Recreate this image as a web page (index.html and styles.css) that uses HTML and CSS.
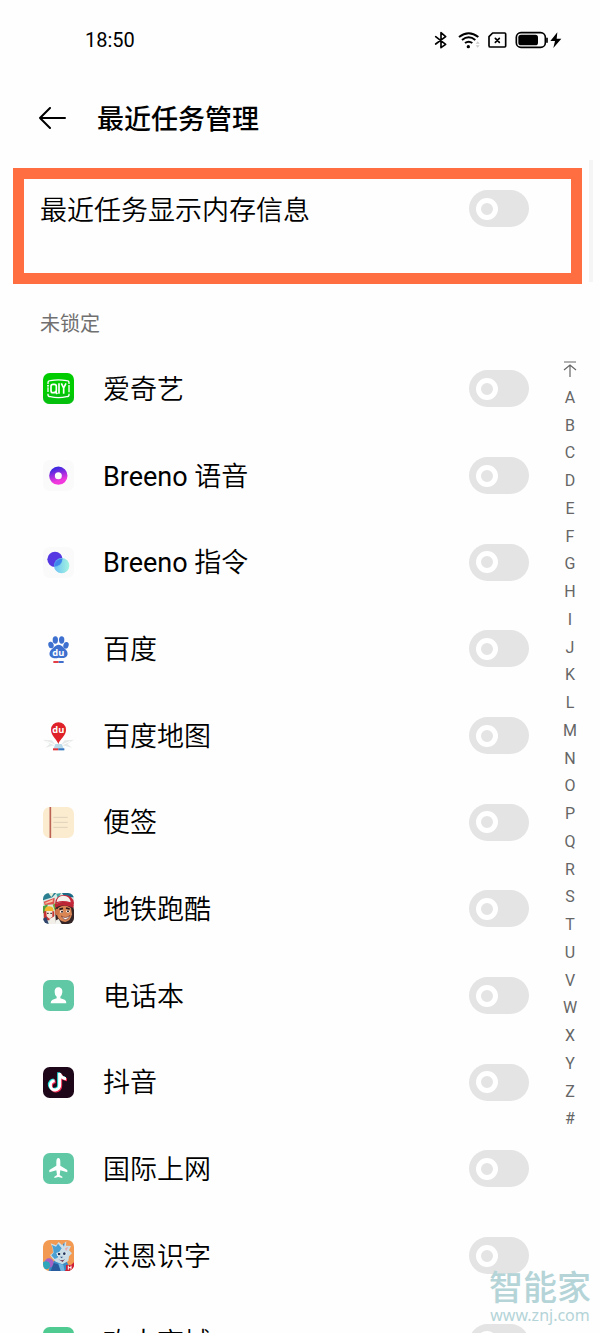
FILE: index.html
```html
<!DOCTYPE html>
<html lang="zh-CN">
<head>
<meta charset="utf-8">
<meta name="viewport" content="width=device-width, initial-scale=1">
<title>最近任务管理</title>
<link rel="stylesheet" href="styles.css">
</head>
<body>
<div class="screen">
  <div class="status">
    <time class="clock">18:50</time>
    <svg class="status-icons" width="130" height="20" viewBox="0 0 390 60" fill="none" stroke="#000" stroke-width="5" stroke-linecap="round" stroke-linejoin="round" aria-hidden="true">
      <path d="M8 20L38 43L24 53V8L38 20L8 42"/>
      <path d="M78 21Q107-2 136 21M87 30Q107 14 127 30M96 39Q107 31 118 39" stroke-width="6" stroke-linecap="butt"/>
      <circle cx="106" cy="50" r="5" fill="#000" stroke="none"/>
      <path d="M128 41L134 34L140 41ZM128 46L134 53L140 46Z" fill="#ccc" stroke="none"/>
      <path d="M179 9H215Q218 9 218 12V48Q218 51 215 51H172Q168 51 168 47V20Z" stroke-width="5"/>
      <path d="M187 25L199 37M199 25L187 37" stroke-width="5"/>
      <rect x="250" y="8" width="87" height="44" rx="14" stroke-width="5"/>
      <rect x="256" y="14" width="59" height="32" rx="8" fill="#000" stroke="none"/>
      <path d="M342 23V38" stroke-width="5" stroke-linecap="butt"/>
      <path d="M373 7L352 33H366L361 54L385 26H371Z" fill="#000" stroke="none"/>
    </svg>
  </div>

  <header class="header">
    <button class="back" aria-label="返回">
      <svg width="28" height="22" viewBox="0 0 28 22" fill="none" stroke="#000" stroke-width="2" stroke-linejoin="round" stroke-linecap="round" aria-hidden="true"><path d="M27 11H2M12 1L2 11L12 21"/></svg>
    </button>
    <h1 class="title">最近任务管理</h1>
  </header>

  <main>
    <section class="highlight">
      <label class="name" for="memory">最近任务显示内存信息</label>
      <input class="switch" id="memory" type="checkbox">
    </section>
    <h2 class="section-title">未锁定</h2>

    <div class="columns">
      <ul class="apps">
        <li class="app">
          <svg class="icon" viewBox="0 0 93 93" aria-hidden="true">
            <rect width="93" height="93" rx="20" fill="#0c0"/><rect y="62" width="93" height="31" rx="20" fill="#09b51a" opacity=".5"/>
            <path d="M15 33V29Q15 23 22 23Q46 18 71 23Q78 23 78 29V33M15 62V66Q15 71 22 71Q46 77 71 71Q78 71 78 66V62M15 43V57M78 36V58" fill="none" stroke="#fff" stroke-width="4"/>
            <circle cx="15" cy="38" r="3" fill="#fff"/>
            <rect x="24" y="34" width="16" height="25" rx="6" fill="none" stroke="#fff" stroke-width="5"/>
            <path d="M36 54L43 63M48 31V62M55 31L62 45L69 31M62 44V62" fill="none" stroke="#fff" stroke-width="5"/>
          </svg>
          <label class="name" for="a1">爱奇艺</label><input class="switch" id="a1" type="checkbox">
        </li>
        <li class="app">
          <svg class="icon" viewBox="0 0 93 93" aria-hidden="true">
            <defs><linearGradient id="ring" x2="0.3" y2="1"><stop stop-color="#3c28e0"/><stop offset=".5" stop-color="#9a2be0"/><stop offset="1" stop-color="#f038dc"/></linearGradient></defs>
            <rect width="93" height="93" rx="20" fill="#fbfafb"/><circle cx="46" cy="47" r="19" fill="none" stroke="url(#ring)" stroke-width="17"/>
          </svg>
          <label class="name" for="a2"><span class="latin">Breeno</span> 语音</label><input class="switch" id="a2" type="checkbox">
        </li>
        <li class="app">
          <svg class="icon" viewBox="0 0 93 93" aria-hidden="true">
            <defs><linearGradient id="mint" x2="1"><stop stop-color="#58b9f5"/><stop offset="1" stop-color="#98f3dc"/></linearGradient></defs>
            <rect width="93" height="93" rx="20" fill="#fbfafb"/><circle cx="36" cy="37" r="23" fill="#5638e2"/><circle cx="56" cy="56" r="23" fill="url(#mint)" opacity=".88"/>
            <path d="M58 35A23 23 0 0 0 34 58A23 23 0 0 0 58 35" fill="#3e86ec"/>
          </svg>
          <label class="name" for="a3"><span class="latin">Breeno</span> 指令</label><input class="switch" id="a3" type="checkbox">
        </li>
        <li class="app">
          <svg class="icon" viewBox="0 0 93 93" aria-hidden="true">
            <g fill="#3d70cf"><ellipse cx="24" cy="36" rx="8" ry="10" transform="rotate(-15 24 36)"/><ellipse cx="37" cy="21" rx="8" ry="11"/><ellipse cx="56" cy="21" rx="8" ry="11"/><ellipse cx="69" cy="37" rx="8" ry="10" transform="rotate(15 69 37)"/>
            <path d="M47 35C56 35 60 42 67 49C78 58 75 74 62 75Q53 76 47 74Q38 77 30 75C15 71 18 55 27 48C34 42 38 35 47 35Z"/></g>
            <text x="46" y="69" class="du">du</text>
            <path d="M31 87H47" stroke="#e43d43" stroke-width="6"/><path d="M47 87H62" stroke="#426fcb" stroke-width="6"/>
          </svg>
          <label class="name" for="a4">百度</label><input class="switch" id="a4" type="checkbox">
        </li>
        <li class="app">
          <svg class="icon" viewBox="0 0 93 93" aria-hidden="true">
            <path d="M0 59L27 61L38 75L7 83L20 72ZM93 59L65 61L54 75L87 83L73 72Z" fill="#e8eaea"/><path d="M10 64L38 76M82 64L54 76" stroke="#fff" stroke-width="3"/>
            <path d="M30 90L37 72H56L64 90Z" fill="#b9d9e9"/>
            <path d="M46 72C42 57 24 48 24 29A22 22 0 0 1 69 29C69 48 50 57 46 72Z" fill="#df2229"/>
            <text x="46" y="39" class="du">du</text>
            <path d="M30 88H46" stroke="#e2353b" stroke-width="6"/><path d="M46 88H64" stroke="#3476bd" stroke-width="6"/>
          </svg>
          <label class="name" for="a5">百度地图</label><input class="switch" id="a5" type="checkbox">
        </li>
        <li class="app">
          <svg class="icon" viewBox="0 0 93 93" aria-hidden="true">
            <rect width="93" height="93" rx="20" fill="#fbecd0"/><path d="M22 0V93" stroke="#bd6354" stroke-width="5"/><path d="M31 31H74M31 46H74M31 61H74" stroke="#dfd2b8" stroke-width="3"/>
          </svg>
          <label class="name" for="a6">便签</label><input class="switch" id="a6" type="checkbox">
        </li>
        <li class="app">
          <svg class="icon" viewBox="0 0 93 93" aria-hidden="true">
            <defs><clipPath id="tile"><rect width="93" height="93" rx="18"/></clipPath></defs>
            <g clip-path="url(#tile)">
              <rect width="93" height="93" fill="#d9ebe4"/>
              <path d="M0 0H40L28 13L0 22Z" fill="#2b7f91"/><path d="M16 0H33L25 12Z" fill="#e7efda"/><path d="M40 3L54 0L45 17Z" fill="#43a6a3"/><path d="M57 0H93V13H65Z" fill="#1a6986"/>
              <path d="M2 26L35 14L34 34L5 36Z" fill="#e0544e"/><path d="M5 30L30 19L29 26L8 32Z" fill="#f8c5a8"/>
              <path d="M0 40L14 34L12 57L0 61Z" fill="#4d9f42"/><path d="M29 35L42 28L38 60Z" fill="#71a941"/>
              <path d="M5 54Q5 39 20 40Q34 41 31 56Z" fill="#f2b72d"/><path d="M2 55H34V82H3Z" fill="#c73332"/><path d="M10 54H28V71L19 77L11 70Z" fill="#f7e8dc"/>
              <path d="M12 61H17M22 61H27" stroke="#222" stroke-width="3"/><path d="M0 77L10 72L17 93H0Z" fill="#30436b"/><path d="M20 77L36 69L43 93H18Z" fill="#f1efe8"/>
              <path d="M36 50Q39 28 64 27Q91 27 93 50V93H39Z" fill="#342426"/>
              <path d="M45 45Q65 30 84 45L87 64Q83 84 67 87Q46 84 42 65Z" fill="#d98554"/><ellipse cx="42" cy="57" rx="6" ry="10" fill="#cf744a"/>
              <path d="M36 32Q38 6 63 6Q90 7 93 30L91 38Q64 22 36 32Z" fill="#c4283a"/>
              <path d="M41 27Q42 9 61 8Q81 9 83 28Q60 20 41 27Z" fill="#f4f1ed"/>
              <path d="M35 34Q60 20 92 36L91 45Q61 31 37 44Z" fill="#bd2635"/>
              <path d="M49 49L60 46M69 45L80 48" stroke="#301d1c" stroke-width="5"/><ellipse cx="56" cy="56" rx="5" ry="4" fill="#fff"/><ellipse cx="75" cy="55" rx="5" ry="4" fill="#fff"/><circle cx="57" cy="56" r="3" fill="#291f21"/><circle cx="75" cy="55" r="3" fill="#291f21"/>
              <path d="M55 69Q68 79 81 67Q77 80 67 80Q59 79 55 69Z" fill="#fff" stroke="#6c2f25" stroke-width="2"/><path d="M39 82L47 78L56 93H37Z" fill="#f4f4f0"/>
            </g>
          </svg>
          <label class="name" for="a7">地铁跑酷</label><input class="switch" id="a7" type="checkbox">
        </li>
        <li class="app">
          <svg class="icon" viewBox="0 0 93 93" aria-hidden="true">
            <rect width="93" height="93" rx="20" fill="#60c8a4"/><path d="M46 22C55 22 59 29 58 37Q57 47 52 50V55L65 59Q70 61 70 70H23Q23 61 29 59L41 55V50Q35 46 35 37C34 28 38 22 46 22Z" fill="#fff"/>
          </svg>
          <label class="name" for="a8">电话本</label><input class="switch" id="a8" type="checkbox">
        </li>
        <li class="app">
          <svg class="icon" viewBox="0 0 93 93" aria-hidden="true">
            <rect width="93" height="93" rx="20" fill="#1d0718"/>
            <g fill="none" stroke-width="9"><path d="M50 18V54A14 14 0 1 1 35 41M50 20Q54 34 69 35" stroke="#25e5e0" transform="translate(-3 -2)"/><path d="M50 18V54A14 14 0 1 1 35 41M50 20Q54 34 69 35" stroke="#f52b55" transform="translate(3 3)"/><path d="M50 18V54A14 14 0 1 1 35 41M50 20Q54 34 69 35" stroke="#fff"/></g>
          </svg>
          <label class="name" for="a9">抖音</label><input class="switch" id="a9" type="checkbox">
        </li>
        <li class="app">
          <svg class="icon" viewBox="0 0 93 93" aria-hidden="true">
            <rect width="93" height="93" rx="20" fill="#60c8a4"/><path d="M46 15Q52 15 52 27V38L73 51V58L52 52L50 66L58 71V75L46 72L34 75V71L42 66L40 52L19 58V51L40 38V27Q40 15 46 15Z" fill="#fff"/>
          </svg>
          <label class="name" for="a10">国际上网</label><input class="switch" id="a10" type="checkbox">
        </li>
        <li class="app">
          <svg class="icon" viewBox="0 0 93 93" aria-hidden="true">
            <defs><clipPath id="tile2"><rect width="93" height="93" rx="20"/></clipPath></defs>
            <g clip-path="url(#tile2)">
              <rect width="93" height="93" fill="#f29a52"/>
              <path d="M17 93Q20 69 35 62L68 61Q80 76 82 93Z" fill="#3a89c5"/>
              <path d="M29 25L23 10L39 16L47 6L57 15L70 4L69 17L84 18L78 31L87 40L78 49L76 63L58 73L38 65L28 55L21 45L30 38Z" fill="#cbdde7"/>
              <path d="M30 24L26 15L39 20L45 11L56 25L48 37L44 53L35 57L25 46L32 38Z" fill="#4b9fd1"/><path d="M59 13L65 8L63 20Z" fill="#4f83af"/><path d="M66 24L76 21L69 34Z" fill="#e3aaa9"/>
              <path d="M40 39L51 35L51 46L43 48ZM60 35L71 38L69 46L60 45Z" fill="#fff"/><circle cx="48" cy="42" r="4" fill="#223659"/><circle cx="64" cy="41" r="4" fill="#223659"/>
              <path d="M51 50H60L56 55Z" fill="#335487"/><path d="M46 58Q58 65 66 56L59 66Z" fill="#71364d"/>
              <circle cx="18" cy="69" r="14" fill="#a562c5"/><circle cx="9" cy="76" r="12" fill="#30a6ba"/><path d="M23 93L32 69L45 73L55 93Z" fill="#285c9f"/><path d="M46 70L61 74L65 93H53Z" fill="#70b5e1"/>
              <path d="M93 67L65 93H93Z" fill="#cf1e34"/><path d="M69 75H93V93H69Z" fill="#cf1e34"/><path d="M76 77V89M84 77V89M76 83H84" stroke="#fff" stroke-width="3"/>
            </g>
          </svg>
          <label class="name" for="a11">洪恩识字</label><input class="switch" id="a11" type="checkbox">
        </li>
        <li class="app">
          <svg class="icon" viewBox="0 0 93 93" aria-hidden="true"><rect width="93" height="93" rx="20" fill="#4fcb91"/><path d="M25 36H68L64 73H29ZM35 36Q36 21 46 21T58 36" fill="none" stroke="#fff" stroke-width="5"/></svg>
          <label class="name" for="a12">欢太商城</label><input class="switch" id="a12" type="checkbox">
        </li>
      </ul>

      <nav class="index" aria-label="字母索引">
        <a href="#top" aria-label="顶部"><svg width="14" height="16" viewBox="0 0 14 16" fill="none" stroke="#666" stroke-width="1.2" aria-hidden="true"><path d="M1 1H13M7 16V4M1 9L7 4L13 9"/></svg></a>
        <a href="#A">A</a><a href="#B">B</a><a href="#C">C</a><a href="#D">D</a><a href="#E">E</a><a href="#F">F</a><a href="#G">G</a><a href="#H">H</a><a href="#I">I</a><a href="#J">J</a><a href="#K">K</a><a href="#L">L</a><a href="#M">M</a><a href="#N">N</a><a href="#O">O</a><a href="#P">P</a><a href="#Q">Q</a><a href="#R">R</a><a href="#S">S</a><a href="#T">T</a><a href="#U">U</a><a href="#V">V</a><a href="#W">W</a><a href="#X">X</a><a href="#Y">Y</a><a href="#Z">Z</a><a href="#other">#</a>
      </nav>
    </div>
  </main>

  <div class="scrollbar"></div>
  <div class="watermark"><span class="brand">智能家</span><span class="site">www.znj.com</span></div>
</div>
</body>
</html>
```
FILE: styles.css
```css
*, *::before { box-sizing: border-box; }

body {
  margin: 0;
  background: #fefefe;
  color: #000;
  font-family: Roboto, "Noto Sans CJK SC", sans-serif;
}

.screen {
  position: relative;
  height: 100vh;
  overflow: hidden;
}

.status {
  display: flex;
  align-items: center;
  justify-content: space-between;
  height: 80px;
  padding: 0 37px 0 85px;
}

.clock { font-size: 20px; line-height: 24px; }

.header {
  display: flex;
  align-items: center;
  gap: 31px;
  height: 76px;
  padding-left: 38px;
}

.back {
  display: flex;
  padding: 0;
  border: 0;
  background: none;
}

.title {
  margin: 0;
  padding-top: 3px;
  font-size: 27px;
  font-weight: 500;
  line-height: 38px;
}

.highlight {
  display: flex;
  align-items: flex-start;
  height: 116px;
  margin: 12px 18px 0 13px;
  padding: 11px 42px 0 16px;
  border: 11px solid #ff6e40;
}

.name {
  flex: 1;
  padding-top: 2px;
  font-size: 27px;
  font-weight: 350;
  line-height: 38px;
}

.latin { font-weight: 400; }

.switch {
  appearance: none;
  display: flex;
  align-items: center;
  flex: none;
  width: 60px;
  height: 37px;
  margin: 0;
  padding-left: 7px;
  border-radius: 20px;
  background: #e4e4e4;
}

.switch::before {
  content: "";
  width: 22px;
  height: 22px;
  border: 5px solid #fff;
  border-radius: 50%;
}

.section-title {
  margin: 28px 0 8px 40px;
  color: #707070;
  font-size: 20px;
  font-weight: 400;
  line-height: 25px;
}

.columns { display: flex; align-items: flex-start; }

.apps {
  display: grid;
  flex: 1;
  grid-auto-rows: 87px 87px 86px;
  margin: 0;
  padding: 0 11px 0 43px;
  list-style: none;
}

.app { display: flex; align-items: center; gap: 29px; }

.icon { flex: none; width: 31px; height: 31px; }

.du {
  fill: #fff;
  font-family: "Open Sans", sans-serif;
  font-size: 28px;
  font-weight: 700;
  text-anchor: middle;
}

.index {
  display: grid;
  grid-auto-rows: 28px 28px 28px 27px;
  width: 60px;
  padding-top: 10px;
}

.index a {
  display: flex;
  align-items: center;
  justify-content: center;
  color: #666;
  font-size: 16px;
  text-decoration: none;
}

.scrollbar {
  position: absolute;
  top: 160px;
  right: 7px;
  width: 4px;
  height: 122px;
  background: #f5f5f5;
}

.watermark {
  position: absolute;
  right: 9px;
  bottom: 8px;
  display: flex;
  flex-direction: column;
  align-items: center;
  gap: 1px;
  color: #b4d4d8;
}

.brand {
  font-family: "Noto Sans CJK SC", sans-serif;
  font-size: 34px;
  font-weight: 500;
  line-height: 36px;
}

.site {
  font-family: "Noto Sans", sans-serif;
  font-size: 16px;
  line-height: 20px;
}
```
